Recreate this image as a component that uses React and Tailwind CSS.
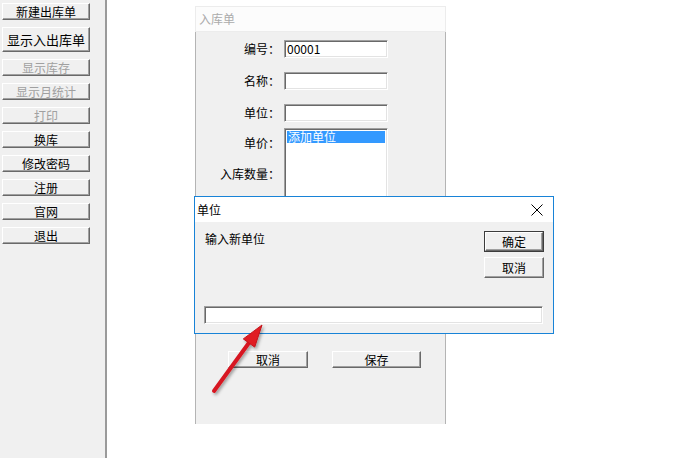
import React from "react"

const font = { fontFamily: '"Noto Sans CJK SC", "Liberation Sans", sans-serif' }

// classic raised win32 button
function Btn({ children, disabled, className = "" }) {
  return (
    <div
      className={
        "flex items-center justify-center bg-[#f0f0f0] border border-t-white border-l-white border-r-[#696969] border-b-[#696969] shadow-[inset_-1px_-1px_0_#a0a0a0] leading-none " +
        (disabled ? "text-[#a0a0a0] " : "text-black ") +
        className
      }
    >
      {children}
    </div>
  )
}

// sunken edit box
function Edit({ className = "", children }) {
  return (
    <div
      className={
        "bg-white border border-t-[#a0a0a0] border-l-[#a0a0a0] border-r-white border-b-white shadow-[inset_1px_1px_0_#696969,inset_-1px_-1px_0_#e3e3e3] " +
        className
      }
    >
      {children}
    </div>
  )
}

const sideItems = [
  { t: "新建出库单" },
  { t: "显示入出库单", big: true },
  { t: "显示库存", disabled: true },
  { t: "显示月统计", disabled: true },
  { t: "打印", disabled: true },
  { t: "换库" },
  { t: "修改密码" },
  { t: "注册" },
  { t: "官网" },
  { t: "退出" },
]

function Row({ label, children, className = "" }) {
  return (
    <div className={"flex items-center " + className}>
      <div className="w-[88px] text-right text-[12px] text-black pr-[4px]">{label}</div>
      {children}
    </div>
  )
}

export default function App() {
  return (
    <div className="relative flex w-[678px] h-[458px] bg-white overflow-hidden text-[12px]" style={font}>
      {/* left button column */}
      <div className="w-[107px] h-full shrink-0 bg-[#f0f0f0] border-r-2 border-[#9a9a9a] flex flex-col gap-[7px] pt-[3px] pl-[2px]">
        {sideItems.map((it) => (
          <Btn
            key={it.t}
            disabled={it.disabled}
            className={"w-[88px] " + (it.big ? "h-[25px] text-[13px]" : "h-[17px] text-[12px]")}
          >
            {it.t}
          </Btn>
        ))}
      </div>

      {/* 入库单 window */}
      <div className="ml-[88px] mt-[6px] w-[251px] h-[418px] flex flex-col">
        <div className="h-[26px] bg-[#fcfcfc] border border-[#ececec] flex items-center pl-[3px] text-[12px] text-[#ababab]">
          入库单
        </div>
        <div className="flex-1 bg-[#f0f0f0] border-l border-r border-[#b4b4b4] flex flex-col pt-[8px]">
          <Row label="编号：">
            <Edit className="w-[104px] h-[18px] flex items-center pl-[2px] text-[12px] leading-none">00001</Edit>
          </Row>
          <Row label="名称：" className="mt-[14px]">
            <Edit className="w-[104px] h-[18px]" />
          </Row>
          <Row label="单位：" className="mt-[14px]">
            <Edit className="w-[104px] h-[18px]" />
          </Row>
          <div className="flex mt-[6px]">
            <div className="w-[88px] flex flex-col items-end pr-[4px] pt-[6px] gap-[13px] text-[12px]">
              <div>单价：</div>
              <div>入库数量：</div>
            </div>
            <Edit className="w-[104px] h-[100px] p-[2px]">
              <div className="bg-[#3399ff] text-white text-[12px] leading-[12px] h-[12px] pl-[1px]">添加单位</div>
            </Edit>
          </div>
          <div className="flex mt-[123px] ml-[32px] gap-[24px]">
            <Btn className="w-[80px] h-[17px] text-[12px]">取消</Btn>
            <Btn className="w-[89px] h-[17px] text-[12px]">保存</Btn>
          </div>
        </div>
      </div>

      {/* 单位 dialog */}
      <div className="absolute left-[194px] top-[196px] w-[360px] h-[138px] border border-[#1883d7] bg-[#f0f0f0] flex flex-col">
        <div className="h-[25px] bg-white flex items-center justify-between pl-[2px] pr-[10px]">
          <span className="text-[12px] text-black">单位</span>
          <svg width="12" height="12" viewBox="0 0 12 12">
            <path d="M0.5 0.5 L11.5 11.5 M11.5 0.5 L0.5 11.5" stroke="#000" strokeWidth="1" />
          </svg>
        </div>
        <div className="flex-1 flex flex-col px-[9px]">
          <div className="flex justify-between">
            <div className="pt-[8px] pl-px text-[12px] text-black">输入新单位</div>
            <div className="flex flex-col gap-[5px] pt-[9px]">
              <div className="border border-[#3c3c3c]">
                <Btn className="w-[58px] h-[19px] text-[12px]">确定</Btn>
              </div>
              <Btn className="w-[60px] h-[21px] text-[12px]">取消</Btn>
            </div>
          </div>
          <Edit className="mt-[28px] w-[339px] h-[18px]" />
        </div>
      </div>

      {/* red arrow annotation */}
      <svg className="absolute left-[205px] top-[318px]" width="66" height="82" viewBox="0 0 66 82">
        <defs>
          <filter id="sh" x="-30%" y="-30%" width="160%" height="160%">
            <feDropShadow dx="1.5" dy="2" stdDeviation="1.5" floodColor="#000" floodOpacity="0.35" />
          </filter>
        </defs>
        <g filter="url(#sh)">
          <path d="M9 73 L46 22" stroke="#d71920" strokeWidth="4" strokeLinecap="round" />
          <path d="M57 7 L49.7 29.1 L38.3 20.9 Z" fill="#e01b22" stroke="#c4151b" strokeWidth="1" strokeLinejoin="round" />
        </g>
      </svg>
    </div>
  )
}
